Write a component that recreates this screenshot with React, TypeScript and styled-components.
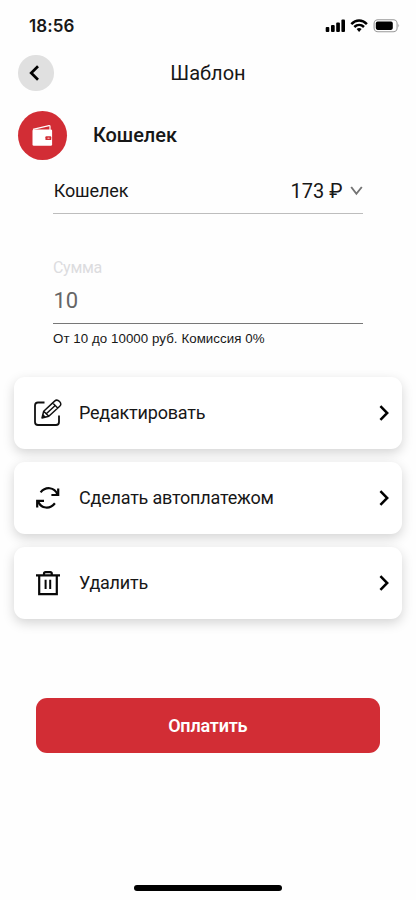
import React from "react";
import styled, { createGlobalStyle } from "styled-components";

const GlobalStyle = createGlobalStyle`
  * { box-sizing: border-box; }
  body { margin: 0; background: #fefefe; }
  button { border: 0; padding: 0; background: none; font: inherit; color: inherit; text-align: left; }
  svg { display: block; flex: none; }
`;

const Screen = styled.main`
  width: 416px;
  height: 900px;
  display: flex;
  flex-direction: column;
  background: #fefefe;
  color: #171717;
  font-family: Roboto, "Liberation Sans", sans-serif;
  overflow: hidden;
`;

const StatusBar = styled.header`
  height: 52px;
  flex: none;
  display: flex;
  align-items: center;
  justify-content: space-between;
  padding: 0 16px 0 29px;
`;

const Clock = styled.time`
  font: 600 17px/20px Inter, sans-serif;
  letter-spacing: 0.05px;
`;

const NavBar = styled.nav`
  height: 42px;
  flex: none;
  display: grid;
  grid-template-columns: 36px 1fr 36px;
  align-items: center;
  padding: 0 18px;
`;

const BackButton = styled.button`
  width: 35.5px;
  height: 35.5px;
  border-radius: 50%;
  background: #e0e0e0;
  display: grid;
  place-items: center;
`;

const NavTitle = styled.h1`
  margin: 0;
  text-align: center;
  font-size: 20px;
  line-height: 24px;
  font-weight: 400;
`;

const Provider = styled.section`
  display: flex;
  align-items: center;
  gap: 26px;
  height: 49px;
  flex: none;
  margin: 17px 18px 0;
`;

const ProviderBadge = styled.div`
  width: 49px;
  height: 49px;
  border-radius: 50%;
  background: #d22d35;
`;

const ProviderName = styled.h2`
  margin: 0 0 2px;
  font-size: 20px;
  line-height: 24px;
  font-weight: 500;
  letter-spacing: -0.05px;
`;

const Form = styled.section`
  width: 309.5px;
  margin-left: 53px;
  height: 216.7px;
  flex: none;
`;

const AccountRow = styled.div`
  height: 54px;
  display: flex;
  align-items: center;
  padding: 8px 0 0 0.7px;
  border-bottom: 1px solid #bdbdbd;
`;

const AccountName = styled.span`
  flex: 1;
  font-size: 18px;
  letter-spacing: -0.1px;
`;

const Balance = styled.span`
  font-size: 20px;
  margin-right: 7px;
`;

const FieldLabel = styled.label`
  display: block;
  margin-top: 44px;
  font-size: 16px;
  line-height: 20px;
  letter-spacing: -0.3px;
  color: #dcdcdf;
`;

const Amount = styled.div`
  height: 46px;
  padding: 10px 0 0 0.5px;
  font-size: 22px;
  line-height: 26px;
  letter-spacing: -0.2px;
  color: #666;
  border-bottom: 1px solid #777;
`;

const Hint = styled.p`
  margin: 7px 0 0;
  font: 13.3px/16px "Liberation Sans", sans-serif;
  letter-spacing: 0.06px;
  white-space: nowrap;
`;

const Actions = styled.section`
  display: flex;
  flex-direction: column;
  gap: 13.4px;
  padding: 0 14px 0 13.5px;
`;

const ActionCard = styled.button`
  height: 72px;
  display: grid;
  grid-template-columns: 28px 1fr 12px;
  column-gap: 17px;
  align-items: center;
  padding: 0 12px 0 20.5px;
  border-radius: 11px;
  background: #fff;
  box-shadow: 0 4px 12px rgba(0, 0, 0, 0.17);
`;

const ActionLabel = styled.span`
  font-size: 18px;
  line-height: 22px;
  letter-spacing: -0.21px;
`;

const PayButton = styled.button`
  margin: 78.5px 36px 0 35.5px;
  height: 55.5px;
  flex: none;
  border-radius: 11px;
  background: #d22d35;
  color: #fff;
  font-size: 18px;
  font-weight: 600;
  letter-spacing: -0.2px;
  text-align: center;
`;

const HomeIndicator = styled.div`
  width: 148px;
  height: 6px;
  flex: none;
  margin: auto auto 9px;
  border-radius: 3px;
  background: #000;
`;

const StatusIcons = () => (
  <svg width="75" height="16" viewBox="0 0 75 16">
    <rect x="0.7" y="9" width="3.6" height="5" rx="1" />
    <rect x="6" y="7" width="3.7" height="7" rx="1" />
    <rect x="11.2" y="4.5" width="3.7" height="9.5" rx="1" />
    <rect x="16.4" y="1.5" width="3.6" height="12.5" rx="1" />
    <g fill="none" stroke="#000" strokeWidth="2.5">
      <path d="M26.3 6.1C31 1.3 37.2 1.3 41.9 6.1" />
      <path d="M29.3 9C32.2 6.2 36.1 6.2 39 9" />
    </g>
    <path d="M31.6 10.9Q34.1 9 36.6 10.9L34.1 13.9Z" />
    <rect x="49.1" y="1.8" width="23" height="11.9" rx="3.8" fill="none" stroke="#999" strokeWidth="1.1" />
    <rect x="50.8" y="3.6" width="17" height="8.3" rx="1.8" />
    <path d="M73.4 5.8Q75 7.6 73.4 9.5Z" fill="#999" />
  </svg>
);

const BackIcon = () => (
  <svg width="36" height="36" viewBox="0 0 36 36" fill="none" stroke="#000" strokeWidth="2.7">
    <path d="M20 11.2 13.2 18l6.8 6.8" />
  </svg>
);

const WalletIcon = () => (
  <svg width="49" height="49" viewBox="0 0 49 49">
    <path d="M15 18.4 31 14.6Q32 14.5 32 15.5V19" fill="none" stroke="#fff" strokeWidth="1.2" />
    <rect x="14.5" y="18.5" width="19.6" height="16.2" rx="1.3" fill="#fff" />
    <rect x="27.4" y="25.3" width="5.9" height="3.8" rx="0.9" fill="#d22d35" />
    <rect x="29.3" y="26.4" width="2.5" height="1.6" rx="0.8" fill="#f0a0a4" />
  </svg>
);

const DownIcon = () => (
  <svg width="13" height="10" viewBox="0 0 13 10" fill="none" stroke="#737373" strokeWidth="1.9">
    <path d="m1.2 1 5.2 6.8L11.8 1" />
  </svg>
);

const NextIcon = () => (
  <svg width="12" height="16" viewBox="0 0 12 16" fill="none" stroke="#000" strokeWidth="2.5">
    <path d="m2.4 1.1 6.8 6.9-6.8 6.9" />
  </svg>
);

const EditIcon = () => (
  <svg width="28" height="28" viewBox="0 0 28 28" fill="none" stroke="#111" strokeWidth="1.8" strokeLinejoin="round">
    <path d="M10.5 3.5H4Q1 3.5 1 6.5V23Q1 26 4 26H22Q25 26 25 23V16.5" />
    <path d="M8 18.9 9.7 12.2 20.6 2.1Q23 0 25.5 2.6T25.7 7.2L14.8 17.2Z M18.7 4 23.7 9 M9.7 12.2 14.8 17.2 M12.3 14.7 21.2 6.5" strokeWidth="1.5" />
    <path d="m8 18.9 1-4 3 3Z" fill="#111" stroke="none" />
  </svg>
);

const RepeatIcon = () => (
  <svg width="28" height="28" viewBox="0 0 28 28" fill="none" stroke="#080808" strokeWidth="2.2">
    <path d="M6.6 8.4C11.6 2.3 20.4 2.8 23.5 10.5 M20.9 19.2C15.9 25.6 7.3 25 4 17.2" />
    <path d="M24.2 4.4V11H17.4 M3.2 23.6V16.8H10" />
  </svg>
);

const TrashIcon = () => (
  <svg width="28" height="28" viewBox="0 0 28 28" fill="none" stroke="#080808" strokeWidth="2.2">
    <path d="M2 6.3H26 M5.2 6.3V25.2H22.8V6.3 M10 6V4.8Q10 3.1 11.6 3.1H16.2Q17.8 3.1 17.8 4.8V6" />
    <path d="M11.6 10.8V20 M16.2 10.8V20" strokeWidth="2" />
  </svg>
);

const actions = [
  { label: "Редактировать", Icon: EditIcon },
  { label: "Сделать автоплатежом", Icon: RepeatIcon },
  { label: "Удалить", Icon: TrashIcon },
];

export default function App() {
  return (
    <Screen>
      <GlobalStyle />
      <StatusBar>
        <Clock>18:56</Clock>
        <StatusIcons />
      </StatusBar>
      <NavBar>
        <BackButton aria-label="Назад"><BackIcon /></BackButton>
        <NavTitle>Шаблон</NavTitle>
      </NavBar>
      <Provider>
        <ProviderBadge><WalletIcon /></ProviderBadge>
        <ProviderName>Кошелек</ProviderName>
      </Provider>
      <Form>
        <AccountRow>
          <AccountName>Кошелек</AccountName>
          <Balance>173 ₽</Balance>
          <DownIcon />
        </AccountRow>
        <FieldLabel>Сумма</FieldLabel>
        <Amount>10</Amount>
        <Hint>От 10 до 10000 руб. Комиссия 0%</Hint>
      </Form>
      <Actions>
        {actions.map(({ label, Icon }) => (
          <ActionCard key={label}>
            <Icon />
            <ActionLabel>{label}</ActionLabel>
            <NextIcon />
          </ActionCard>
        ))}
      </Actions>
      <PayButton>Оплатить</PayButton>
      <HomeIndicator />
    </Screen>
  );
}
